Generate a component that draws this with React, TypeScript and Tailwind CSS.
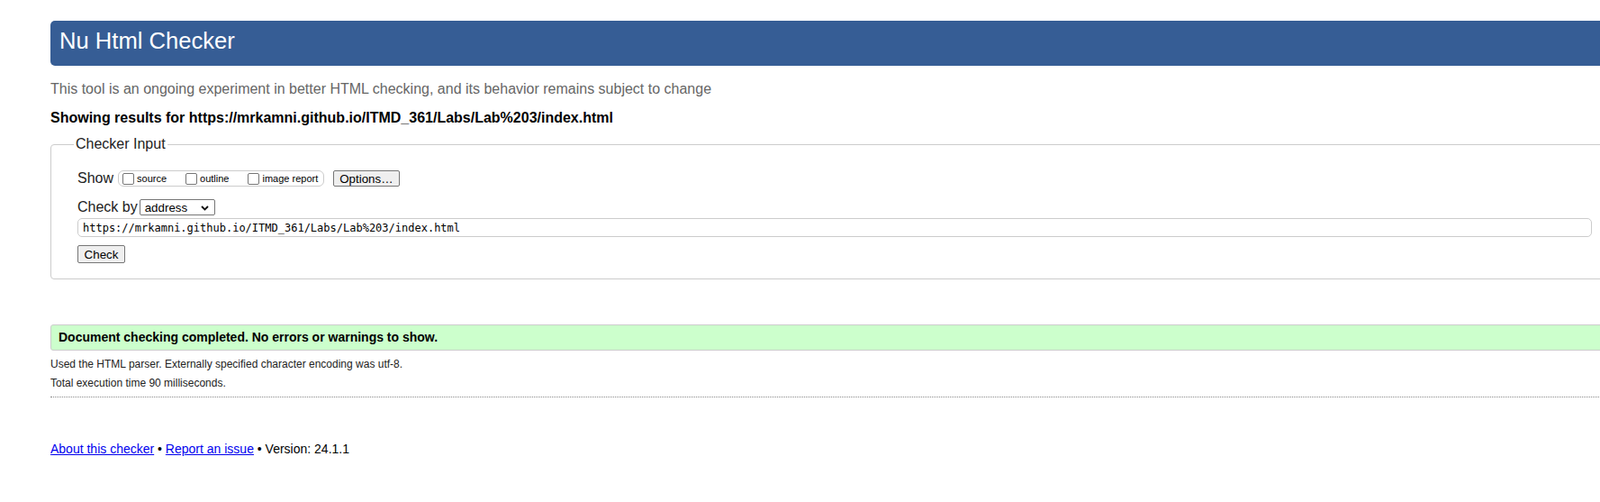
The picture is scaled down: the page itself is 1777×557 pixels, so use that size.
const url = 'https://mrkamni.github.io/ITMD_361/Labs/Lab%203/index.html'

function Box({ label, last = false }: { label: string; last?: boolean }) {
  return (
    <label className={`flex items-center ${last ? '' : 'mr-[21px]'}`}>
      <input type="checkbox" className="h-[13px] w-[13px] appearance-none rounded-[2px] border border-[#767676] bg-white" />
      <span className="ml-[3px] text-[11px] leading-[13px]">{label}</span>
    </label>
  )
}

function Btn({ children, className = '' }: { children: string; className?: string }) {
  return (
    <button className={`rounded-[2px] border border-[#767676] bg-[#efefef] px-[6px] text-[13.33px] leading-[15px] text-black ${className}`}>
      {children}
    </button>
  )
}

export default function App() {
  return (
    <div className="h-[557px] w-[1777px] overflow-hidden bg-white font-['Liberation_Sans',Arial,sans-serif] text-black">
      <div className="ml-[56px] w-[1742px] pt-[23px]">
        <h1 className="h-[50px] rounded-[5px] bg-[#365d95] pl-[10px] pt-[8px] text-[25.6px] font-normal leading-[28px] text-white">
          Nu Html Checker
        </h1>
        <p className="mt-[17px] text-[16px] leading-[18px] text-[#666]">
          This tool is an ongoing experiment in better HTML checking, and its behavior remains subject to change
        </p>
        <p className="mt-[14px] text-[16px] font-bold leading-[18px]">Showing results for {url}</p>

        <fieldset className="mt-[11px] rounded-[4px] border border-[#ccc] px-[29px] pb-[17px]">
          <legend className="ml-[-4px] px-[2px] text-[16px] leading-[18px] text-[#222]">Checker Input</legend>

          <div className="mt-[20px] flex h-[18px] items-center">
            <span className="mb-[1px] text-[16px] leading-[18px] text-[#222]">Show</span>
            <div className="ml-[5px] flex h-[18px] items-center rounded-[6px] border border-[#ccc] pl-[4px] pr-[6px]">
              <Box label="source" />
              <Box label="outline" />
              <Box label="image report" last />
            </div>
            <Btn className="ml-[10px] h-[18px]">Options…</Btn>
          </div>

          <div className="mt-[14px] flex h-[18px] items-center">
            <span className="text-[16px] leading-[18px] text-[#222]">Check by</span>
            <div className="ml-[2px] flex h-[18px] w-[84px] items-center justify-between rounded-[2px] border border-[#767676] bg-white pl-[5px] pr-[6px] text-[13.33px] leading-[15px]">
              <span>address</span>
              <svg width="9" height="6" viewBox="0 0 9 6" className="mt-[1px]">
                <path d="M1 1l3.5 3.5L8 1" fill="none" stroke="#111" strokeWidth="1.8" />
              </svg>
            </div>
          </div>

          <input
            readOnly
            value={url}
            className="mt-[3px] block h-[21px] w-full rounded-[5px] border border-[#ccc] pl-[5px] font-['DejaVu_Sans_Mono',monospace] text-[12px] text-black"
          />
          <Btn className="mt-[9px] block h-[20px] w-[53px]">Check</Btn>
        </fieldset>

        <div className="mt-[50px] flex h-[29px] items-center rounded-[3px] border border-[#ccc] bg-[#ccffcc] pl-[8px] text-[14px] font-bold">
          Document checking completed. No errors or warnings to show.
        </div>
        <p className="mt-[5px] text-[12px] leading-[21px] text-[#222]">
          Used the HTML parser. Externally specified character encoding was utf-8.
        </p>
        <p className="text-[12px] leading-[21px] text-[#222]">Total execution time 90 milliseconds.</p>
        <hr className="mt-[4px] border-t border-dotted border-[#888]" />

        <p className="mt-[49px] text-[14px] leading-[16px]">
          <a href="#" className="text-[#0000ee] underline">About this checker</a> •{' '}
          <a href="#" className="text-[#0000ee] underline">Report an issue</a> • Version: 24.1.1
        </p>
      </div>
    </div>
  )
}
